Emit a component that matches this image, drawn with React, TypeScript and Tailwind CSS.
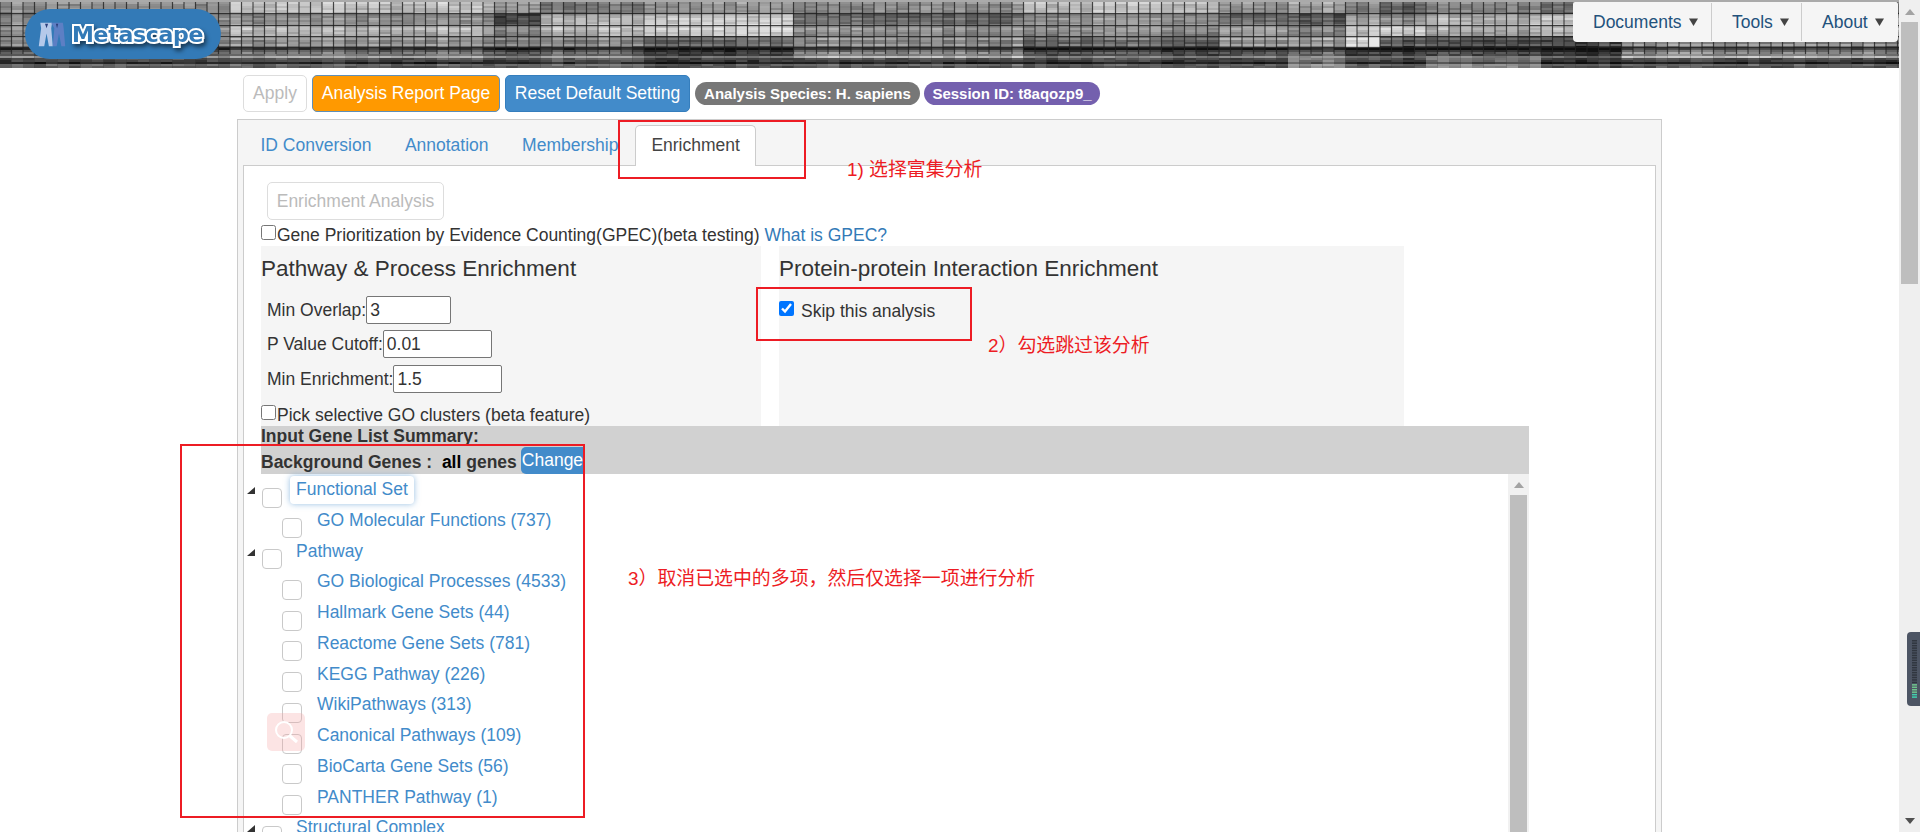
import { useMemo } from "react";

// brightness per band: [x start, x end, [bands top to bottom]]
const heatBlocks: [number, number, number[]][] = [
  [0, 220, [0.55, 0.55, 0.6, 0.55, 0.38, 0.24]],
  [220, 490, [0.72, 0.55, 0.74, 0.58, 0.45, 0.24]],
  [490, 535, [0.58, 0.3, 0.55, 0.5, 0.32, 0.22]],
  [535, 640, [0.45, 0.72, 0.76, 0.55, 0.42, 0.3]],
  [640, 790, [0.55, 0.8, 0.84, 0.42, 0.24, 0.18]],
  [790, 865, [0.5, 0.45, 0.6, 0.55, 0.5, 0.22]],
  [865, 1013, [0.55, 0.42, 0.6, 0.55, 0.52, 0.24]],
  [1013, 1210, [0.72, 0.58, 0.6, 0.42, 0.3, 0.22]],
  [1210, 1280, [0.55, 0.45, 0.68, 0.6, 0.32, 0.22]],
  [1280, 1340, [0.6, 0.38, 0.55, 0.62, 0.4, 0.45]],
  [1340, 1370, [0.5, 0.65, 0.82, 0.88, 0.24, 0.24]],
  [1370, 1420, [0.35, 0.55, 0.82, 0.35, 0.22, 0.2]],
  [1420, 1540, [0.5, 0.7, 0.7, 0.32, 0.3, 0.42]],
  [1540, 1620, [0.4, 0.76, 0.72, 0.3, 0.2, 0.18]],
  [1620, 1899, [0.45, 0.7, 0.78, 0.55, 0.52, 0.22]],
];

function HeatMap() {
  const cells = useMemo(() => {
    let seed = 7;
    const rnd = () => {
      seed = (seed * 16807) % 2147483647;
      return seed / 2147483647;
    };
    const out: { x: number; y: number; w: number; g: number }[] = [];
    const bandAt = (y: number) => (y < 13 ? 0 : y < 25 ? 1 : y < 36 ? 2 : y < 48 ? 3 : y < 57 ? 4 : 5);
    const colNoise = Array.from({ length: 170 }, () => (rnd() - 0.5) * 0.1);
    for (let y = 2; y < 68; y += 2) {
      const rowNoise = (rnd() - 0.5) * (y > 44 ? 0.55 : 0.16);
      let c = 0;
      for (let x = 0; x < 1899; x += 11.5) {
        const block = heatBlocks.find((b) => x >= b[0] && x < b[1]) ?? heatBlocks[0];
        const level = block[2][bandAt(y)] + rowNoise + colNoise[c] + (rnd() - 0.5) * 0.14;
        const g = Math.max(14, Math.min(232, Math.round(level * 255)));
        out.push({ x, y, w: 11.5, g });
        c++;
      }
    }
    return out;
  }, []);
  const cols = useMemo(() => Array.from({ length: 166 }, (_, i) => i * 11.5), []);
  return (
    <svg className="absolute inset-0 blur-[0.5px]" width="1899" height="68" viewBox="0 0 1899 68">
      <rect width="1899" height="68" fill="#333" />
      {cells.map((c, i) => (
        <rect key={i} x={c.x} y={c.y} width={c.w} height="2" fill={`rgb(${c.g},${c.g},${c.g})`} />
      ))}
      {cols.map((x) => (
        <rect key={x} x={x - 0.6} y="2" width="1.2" height="52" fill="#222" opacity="0.75" />
      ))}
      {[13, 25, 36, 47].map((y) => (
        <rect key={y} x="0" y={y} width="1899" height="1.2" fill="#1a1a1a" opacity="0.8" />
      ))}
      <rect width="1899" height="2" fill="#aaa" />
    </svg>
  );
}

function LogoMark() {
  return (
    <svg width="28" height="27" viewBox="0 0 36 30" preserveAspectRatio="none" className="shrink-0">
      <path d="M3 2h15l-1 6 2 20h-5l-3-14-3 14H1l3-20z" fill="#b5c9ea" />
      <path d="M17 2h15l1 6 2 20h-5l-3-14-3 14h-5l2-20z" fill="#5d7fc4" />
      <path d="M9 3l2 5 2-5zM23 3l1.5 5L26 3z" fill="#2c3f7c" />
    </svg>
  );
}

function NavItem({ label, className }: { label: string; className: string }) {
  return (
    <div className={`flex items-center h-[38px] pl-[20px] gap-[7px] ${className}`}>
      <span className="text-[#23527c]">{label}</span>
      <svg width="9" height="8" viewBox="0 0 9 8">
        <polygon points="0,0.5 9,0.5 4.5,8" fill="#444" />
      </svg>
    </div>
  );
}

function NumberField({ label, value, labelMb, width }: { label: string; value: string; labelMb: string; width: string }) {
  return (
    <div className={`flex items-center pl-[6px] ${labelMb}`}>
      <span>{label}</span>
      <input
        readOnly
        value={value}
        className={`${width} h-[28px] border border-[#767676] rounded-[2px] bg-white pl-[3px] text-[#333] outline-none`}
      />
    </div>
  );
}

type TreeRow = { label: string; group?: boolean; active?: boolean };

const treeRows: TreeRow[] = [
  { label: "Functional Set", group: true, active: true },
  { label: "GO Molecular Functions (737)" },
  { label: "Pathway", group: true },
  { label: "GO Biological Processes (4533)" },
  { label: "Hallmark Gene Sets (44)" },
  { label: "Reactome Gene Sets (781)" },
  { label: "KEGG Pathway (226)" },
  { label: "WikiPathways (313)" },
  { label: "Canonical Pathways (109)" },
  { label: "BioCarta Gene Sets (56)" },
  { label: "PANTHER Pathway (1)" },
  { label: "Structural Complex", group: true },
];

function TreeLine({ row }: { row: TreeRow }) {
  return (
    <div className={`flex items-start h-[30.75px] shrink-0 ${row.group ? "" : "pl-[21px]"}`}>
      {row.group ? (
        <svg className="mt-[12px] ml-[-14px] mr-[7px] shrink-0" width="8" height="8" viewBox="0 0 8 8">
          <polygon points="8,0 8,7 0,7" fill="#333" />
        </svg>
      ) : null}
      <span className="mt-[12.5px] w-[20px] h-[20px] shrink-0 rounded-[4px] border border-[#c9c9c9] bg-white" />
      {row.group ? (
        <span
          className={`ml-[8px] mt-[1px] h-[28px] px-[6px] leading-[26px] rounded-[4px] text-[#428bca] ${
            row.active ? "bg-white shadow-[0_0_6px_rgba(66,139,202,0.55)]" : ""
          }`}
        >
          {row.label}
        </span>
      ) : (
        <span className="ml-[15px] mt-[1px] leading-[26px] text-[#428bca]">{row.label}</span>
      )}
    </div>
  );
}

function RedBox({ className }: { className: string }) {
  return <div className={`absolute border-2 border-[#ed1c24] pointer-events-none ${className}`} />;
}

function Note({ className, children }: { className: string; children: string }) {
  return <div className={`absolute text-[#ed1c24] text-[18.9px] leading-[24px] whitespace-nowrap ${className}`}>{children}</div>;
}

export default function App() {
  return (
    <div className="relative flex w-[1920px] h-[832px] overflow-hidden bg-white text-[17.5px] text-[#333] font-['Liberation_Sans','Noto_Sans_CJK_SC',sans-serif]">
      <div className="w-[1899px] shrink-0 flex flex-col">
        {/* Header */}
        <header className="relative h-[68px] shrink-0 flex justify-between items-start">
          <HeatMap />
          <div className="relative mt-[9px] ml-[25px] w-[196px] h-[50px] rounded-[25px] bg-[#337ab7] flex items-center pl-[13px] gap-[6px]">
            <LogoMark />
            <span className="font-['DejaVu_Sans',sans-serif] font-bold text-[22px] tracking-[-0.3px] text-[#337ab7] [-webkit-text-stroke:4px_#fff] [paint-order:stroke_fill] [filter:drop-shadow(2px_3px_2px_rgba(0,0,0,0.5))]">
              Metascape
            </span>
          </div>
          <nav className="relative mt-[2px] mr-[1px] h-[40px] w-[325px] rounded-b-[4px] rounded-t-[2px] bg-[#f5f5f5] flex items-center">
            <NavItem label="Documents" className="w-[138px]" />
            <NavItem label="Tools" className="w-[90px] border-l border-[#ccc]" />
            <NavItem label="About" className="w-[97px] border-l border-[#ccc]" />
          </nav>
        </header>

        {/* Toolbar */}
        <div className="flex items-center h-[37px] mt-[7px] ml-[243px] shrink-0">
          <button className="w-[64px] h-[37px] rounded-[5px] border border-[#ddd] text-[#bbb]">Apply</button>
          <button className="ml-[5px] w-[188px] h-[37px] rounded-[5px] border border-[#5f8fb8] bg-[#ff9900] text-white">
            Analysis Report Page
          </button>
          <button className="ml-[5px] w-[185px] h-[37px] rounded-[5px] border border-[#357ebd] bg-[#428bca] text-white">
            Reset Default Setting
          </button>
          <span className="ml-[5px] w-[225px] h-[23px] rounded-[12px] bg-[#777] text-white font-bold text-[15px] leading-[23px] text-center">
            Analysis Species: H. sapiens
          </span>
          <span className="ml-[4px] w-[176px] h-[23px] rounded-[12px] bg-[#7460ae] text-white font-bold text-[15px] leading-[23px] text-center">
            Session ID: t8aqozp9_
          </span>
        </div>

        {/* Panel */}
        <main className="mt-[7px] ml-[237px] w-[1425px] flex-1 min-h-0 border-t border-x border-[#ccc] bg-[#f5f5f5] pl-[5px] pr-[5px] flex flex-col">
          <div className="flex items-end h-[45px] shrink-0 pl-[1px] relative z-10">
            {["ID Conversion", "Annotation", "Membership"].map((t) => (
              <div key={t} className="h-[40px] px-[16.5px] mr-[0.5px] leading-[40px] text-[#428bca]">
                {t}
              </div>
            ))}
            <div className="h-[41px] -mb-px w-[121px] px-[15px] leading-[39px] bg-white border border-b-0 border-[#ccc] rounded-t-[5px] text-[#444]">
              Enrichment
            </div>
          </div>

          <section className="flex-1 min-h-0 bg-white border-t border-x border-[#ccc] pl-[17px] pt-[16px] flex flex-col overflow-hidden">
            <button className="ml-[6px] w-[177px] h-[38px] shrink-0 rounded-[5px] border border-[#ddd] text-[#bbb]">
              Enrichment Analysis
            </button>
            <div className="flex items-start h-[26px] shrink-0 pt-[5px] leading-[20px]">
              <input type="checkbox" readOnly className="w-[15px] h-[15px] m-0 shrink-0" />
              <span className="ml-[1px]">Gene Prioritization by Evidence Counting(GPEC)(beta testing)</span>
              <span className="ml-[5px] text-[#337ab7]">What is GPEC?</span>
            </div>

            <div className="flex h-[180px] shrink-0 gap-[18px]">
              <div className="w-[500px] bg-[#f5f5f5] flex flex-col">
                <h3 className="text-[22.5px] leading-[30px] mt-[8px] mb-[12px]">Pathway &amp; Process Enrichment</h3>
                <NumberField label="Min Overlap:" value="3" labelMb="mb-[6px]" width="w-[85px]" />
                <NumberField label="P Value Cutoff:" value="0.01" labelMb="mb-[7px]" width="w-[109px]" />
                <NumberField label="Min Enrichment:" value="1.5" labelMb="" width="w-[109px]" />
                <div className="flex items-start mt-[12px] leading-[20px]">
                  <input type="checkbox" readOnly className="w-[15px] h-[15px] m-0 shrink-0" />
                  <span className="ml-[1px]">Pick selective GO clusters (beta feature)</span>
                </div>
              </div>
              <div className="w-[625px] bg-[#f5f5f5]">
                <h3 className="text-[22.5px] leading-[30px] mt-[8px] mb-[17px]">Protein-protein Interaction Enrichment</h3>
                <div className="flex items-start leading-[20px]">
                  <input type="checkbox" readOnly checked className="w-[15px] h-[15px] m-0 shrink-0" />
                  <span className="ml-[7px]">Skip this analysis</span>
                </div>
              </div>
            </div>

            <div className="w-[1268px] h-[48px] shrink-0 bg-[#d1d1d1] font-bold leading-[23px]">
              <div className="h-[22px] leading-[20px]">Input Gene List Summary:</div>
              <div className="flex items-end h-[26px]">
                <span>Background Genes :&nbsp;&nbsp;<span className="text-black">all</span> genes</span>
                <span className="ml-[4px] w-[62px] h-[27px] rounded-l-[5px] bg-[#428bca] text-white font-normal leading-[27px] pl-[1px]">
                  Change
                </span>
              </div>
            </div>

            <div className="w-[1268px] flex-1 min-h-0 flex">
              <div className="flex-1 flex flex-col pt-px">
                {treeRows.map((r) => (
                  <TreeLine key={r.label} row={r} />
                ))}
              </div>
              <div className="w-[21px] bg-[#f1f1f1] flex flex-col items-center pt-[8px]">
                <svg width="10" height="6" viewBox="0 0 10 6">
                  <polygon points="5,0 10,6 0,6" fill="#a3a3a3" />
                </svg>
                <div className="mt-[7px] w-[17px] flex-1 bg-[#bebebe]" />
              </div>
            </div>
          </section>
        </main>
      </div>

      {/* Page scrollbar */}
      <div className="w-[21px] shrink-0 bg-[#efefef] flex flex-col items-center pt-[9px] pb-[8px]">
        <svg width="10" height="6" viewBox="0 0 10 6">
          <polygon points="5,0 10,6 0,6" fill="#a3a3a3" />
        </svg>
        <div className="mt-[7px] w-[17px] h-[262px] bg-[#bebebe]" />
        <div className="flex-1" />
        <svg width="10" height="6" viewBox="0 0 10 6">
          <polygon points="0,0 10,0 5,6" fill="#505050" />
        </svg>
      </div>

      {/* Floating helper widgets */}
      <div className="absolute left-[1907px] top-[632px] w-[13px] h-[74px] rounded-l-[4px] bg-[#4d5564] pl-[5px] pt-[8px]">
        <svg width="6" height="60" viewBox="0 0 6 60">
          {Array.from({ length: 24 }, (_, i) => (
            <rect key={i} x="0" y={i * 2.45} width="5" height="1.5" fill={i < 18 ? "#30363f" : i < 22 ? "#6fc48d" : "#3fcfae"} />
          ))}
        </svg>
      </div>
      <div className="absolute left-[267px] top-[713px] w-[38px] h-[38px] rounded-[5px] bg-[#f4a6a6]/30 flex items-center justify-center">
        <svg width="26" height="26" viewBox="0 0 26 26" fill="none" stroke="#fff" strokeWidth="2">
          <circle cx="11" cy="11" r="8" />
          <path d="M17 17l7 6" strokeWidth="3" />
        </svg>
      </div>

      {/* Annotations */}
      <RedBox className="left-[618px] top-[120px] w-[188px] h-[59px]" />
      <RedBox className="left-[756px] top-[287px] w-[216px] h-[54px]" />
      <RedBox className="left-[180px] top-[444px] w-[405px] h-[374px]" />
      <Note className="left-[847px] top-[158px]">1) 选择富集分析</Note>
      <Note className="left-[988px] top-[334px]">2）勾选跳过该分析</Note>
      <Note className="left-[628px] top-[567px]">3）取消已选中的多项，然后仅选择一项进行分析</Note>
    </div>
  );
}
